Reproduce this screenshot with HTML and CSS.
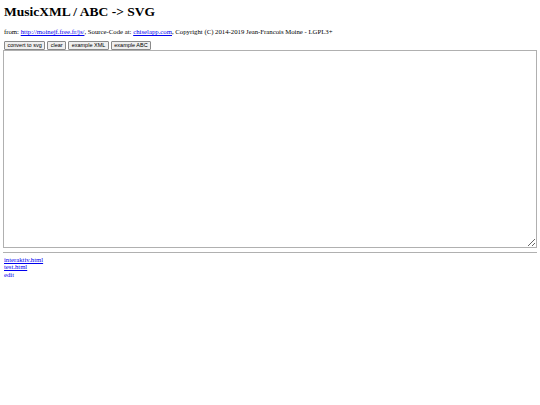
FILE: index.html
```html
<!DOCTYPE html>
<html>
<head>
<meta charset="utf-8">
<title>MusicXML / ABC -&gt; SVG</title>
<link rel="stylesheet" href="styles.css">
</head>
<body>
<h1 class="title">MusicXML / ABC -&gt; SVG</h1>
<p class="credits">from: <a href="#">http://moinejf.free.fr/js/</a>, Source-Code at: <a href="#">chiselapp.com</a>, Copyright (C) 2014-2019 Jean-Francois Moine - LGPL3+</p>
<div class="toolbar">
<button class="btn">convert to svg</button>
<button class="btn">clear</button>
<button class="btn">example XML</button>
<button class="btn">example ABC</button>
</div>
<textarea class="source"></textarea>
<hr class="rule">
<div class="links">
<a href="#">interaktiv.html</a><br>
<a href="#">test.html</a><br>
<a href="#">edit</a>
</div>
</body>
</html>
```

FILE: styles.css
```css
html, body {
  background: #fff;
}
body {
  margin: 4px 3px 0 3px;
  font-family: "Liberation Serif", "Times New Roman", serif;
  font-size: 6.7px;
  color: #000;
}
.title {
  font-size: 13.5px;
  font-weight: bold;
  margin: 0 0 0 1px;
  line-height: 15px;
}
.credits {
  margin: 9px 0 0 1px;
  font-size: 6.75px;
  line-height: 8px;
}
a {
  color: #0000ee;
  text-decoration: underline;
}
.toolbar {
  margin: 5px 0 0 1px;
  display: flex;
  gap: 2px;
}
.btn {
  font-family: "Liberation Sans", Arial, sans-serif;
  font-size: 5.5px;
  padding: 0 2.5px;
  height: 9px;
  line-height: 7px;
  background: #efefef;
  border: 1px solid #8a8a8a;
  border-radius: 1px;
  color: #000;
}
.source {
  display: block;
  box-sizing: border-box;
  width: 534px;
  height: 198px;
  margin: 0;
  border: 1px solid #b0b0b0;
  padding: 1px;
  resize: both;
}
.rule {
  margin: 3.5px 0 0 0;
  border: 0;
  border-top: 1px solid #b0b0b0;
  height: 0;
}
.links {
  margin: 3px 0 0 1px;
  line-height: 7.5px;
}
```
